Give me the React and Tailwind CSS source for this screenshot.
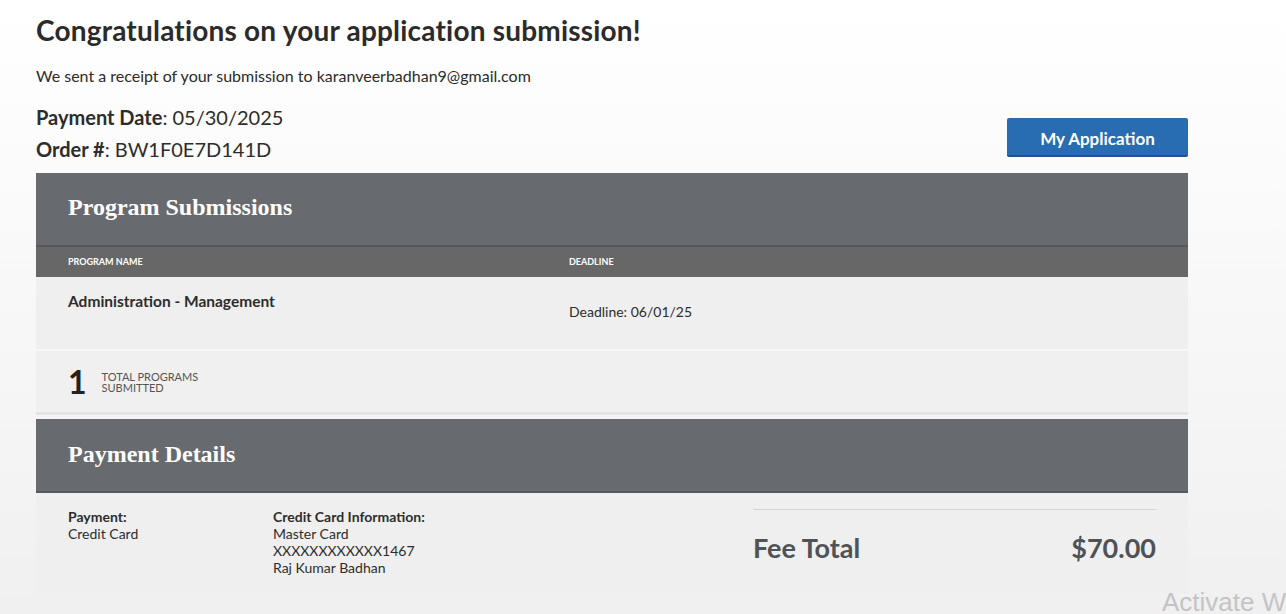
export default function App() {
  return (
    <div className="relative min-h-[614px] w-full overflow-hidden bg-gradient-to-b from-white to-[#f0f0f0] font-['Lato',sans-serif] text-[#2d2d2d]">
      <div className="w-[1152px] ml-[36px] pt-[12px]">
        <h1 className="text-[28px] font-bold leading-[36px] text-[#2b2b2b] tracking-[0.2px]">
          Congratulations on your application submission!
        </h1>
        <p className="mt-[18px] text-[16px] leading-[20px] text-[#2b2b2b]">
          We sent a receipt of your submission to karanveerbadhan9@gmail.com
        </p>

        <div className="mt-[15px] flex items-end justify-between">
          <div className="text-[20px] leading-[32px]">
            <div>
              <span className="font-bold">Payment Date</span>: 05/30/2025
            </div>
            <div>
              <span className="font-bold">Order #</span>: BW1F0E7D141D
            </div>
          </div>
          <button className="mb-[8px] h-[39px] w-[181px] rounded-[2px] border-b-2 border-[#1d548c] bg-[#286db1] pt-[4px] text-[17px] font-bold text-white">
            My Application
          </button>
        </div>

        {/* Program Submissions */}
        <div className="mt-[8px]">
          <div className="flex h-[74px] items-center border-b-2 border-[#55595d] bg-[#676b6f] px-[32px] pb-[4px]">
            <h2 className="font-['Liberation_Serif',serif] text-[24px] font-bold text-white">
              Program Submissions
            </h2>
          </div>
          <div className="grid h-[30px] grid-cols-[501px_1fr] items-center bg-[#676767] px-[32px] text-[9px] font-bold uppercase text-white">
            <span>Program Name</span>
            <span>Deadline</span>
          </div>
          <div className="grid h-[72px] grid-cols-[501px_1fr] bg-[#efefef] px-[32px]">
            <div className="pt-[14px] text-[15.5px] font-bold leading-[20px]">Administration - Management</div>
            <div className="pt-[25px] text-[14px] leading-[20px]">Deadline: 06/01/25</div>
          </div>
          <div className="mt-[2px] flex h-[64px] items-center gap-[15px] border-b-[3px] border-[#e4e4e4] bg-[#f0f0f0] px-[32px]">
            <span className="text-[32px] font-bold leading-none text-[#222]">1</span>
            <span className="text-[11px] uppercase leading-[11px] text-[#555]">
              Total Programs
              <br />
              Submitted
            </span>
          </div>
        </div>

        {/* Payment Details */}
        <div className="mt-[4px]">
          <div className="flex h-[74px] items-center border-b-2 border-[#55595d] bg-[#676b6f] px-[32px] pb-[2px]">
            <h2 className="font-['Liberation_Serif',serif] text-[24px] font-bold text-white">
              Payment Details
            </h2>
          </div>
          <div className="flex h-[100px] bg-[#efefef] pl-[32px] pr-[32px]">
            <div className="w-[205px] pt-[15px] text-[14px] leading-[17px]">
              <div className="font-bold">Payment:</div>
              <div>Credit Card</div>
            </div>
            <div className="w-[480px] pt-[15px] text-[14px] leading-[17px]">
              <div className="font-bold">Credit Card Information:</div>
              <div>Master Card</div>
              <div>XXXXXXXXXXXX1467</div>
              <div>Raj Kumar Badhan</div>
            </div>
            <div className="flex-1 pt-[16px]">
              <div className="border-t border-[#d5d5d5] pt-[18px]">
                <div className="flex items-center justify-between text-[27px] font-bold text-[#4f5256]">
                  <span>Fee Total</span>
                  <span>$70.00</span>
                </div>
              </div>
            </div>
          </div>
        </div>
      </div>

      <div className="absolute left-[1162px] top-[583px] whitespace-nowrap font-['Liberation_Sans',sans-serif] text-[26px] text-[#c4c4c4]">
        Activate Windows
      </div>
    </div>
  );
}
